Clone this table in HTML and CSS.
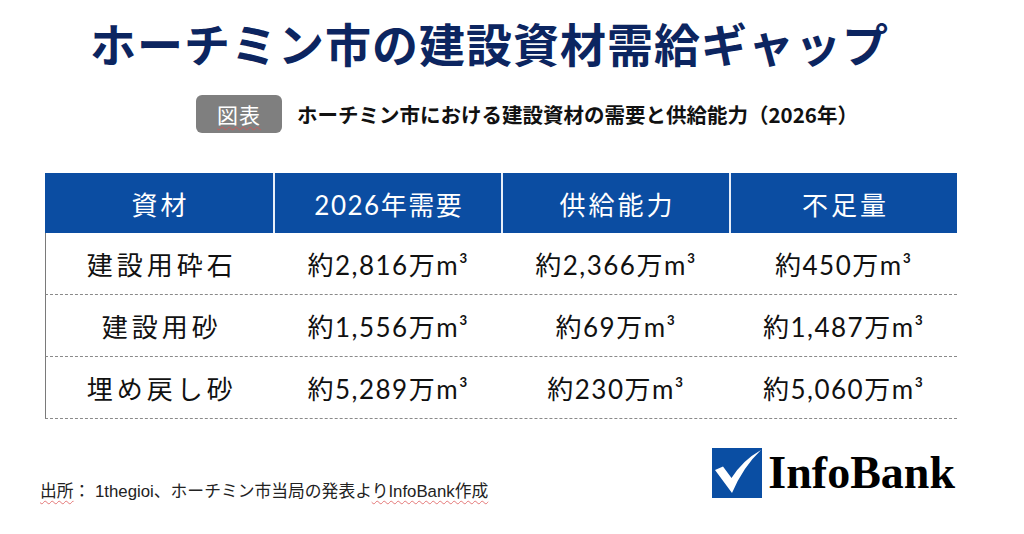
FILE: index.html
```html
<!DOCTYPE html>
<html lang="ja">
<head>
<meta charset="utf-8">
<title>ホーチミン市の建設資材需給ギャップ</title>
<link rel="stylesheet" href="styles.css">
</head>
<body>
<div class="page">
  <h1 class="title">ホーチミン市の建設資材需給ギャップ</h1>
  <div class="caption">
    <span class="pill"><span class="squiggle">図表</span></span>
    <span class="caption-text">ホーチミン市における建設資材の需要と供給能力（2026年）</span>
  </div>
  <div class="table">
    <div class="row head">
      <div class="cell label">資材</div>
      <div class="cell">2026年需要</div>
      <div class="cell label">供給能力</div>
      <div class="cell label">不足量</div>
    </div>
    <div class="row body">
      <div class="cell label">建設用砕石</div>
      <div class="cell">約2,816万m³</div>
      <div class="cell">約2,366万m³</div>
      <div class="cell">約450万m³</div>
    </div>
    <div class="row body">
      <div class="cell label">建設用砂</div>
      <div class="cell">約1,556万m³</div>
      <div class="cell">約69万m³</div>
      <div class="cell">約1,487万m³</div>
    </div>
    <div class="row body">
      <div class="cell label">埋め戻し砂</div>
      <div class="cell">約5,289万m³</div>
      <div class="cell">約230万m³</div>
      <div class="cell">約5,060万m³</div>
    </div>
  </div>
  <div class="footer">
    <p class="source"><span class="squiggle">出所</span>： 1thegioi、ホーチミン市当局の発表よ<span class="squiggle">りInfoBank作成</span></p>
    <div class="logo">
      <svg class="logo-mark" viewBox="0 0 50 50" width="50" height="50" aria-hidden="true">
        <rect x="0" y="0" width="50" height="50" fill="#0a4ea3"/>
        <path d="M3 22 L11 18.5 L19.5 30 Q31 12 49 2 Q31 19 20 45 Z" fill="#ffffff"/>
      </svg>
      <span class="logo-text">InfoBank</span>
    </div>
  </div>
</div>
</body>
</html>
```
FILE: styles.css
```css
* { box-sizing: border-box; }
html, body { margin: 0; padding: 0; background: #ffffff; }
body {
  font-family: Lato, "Noto Sans CJK JP", sans-serif;
  color: #111111;
}
.page {
  width: 1024px;
  height: 534px;
  overflow: hidden;
}
.title {
  margin: 0;
  padding: 14px 0 0 90px;
  font-family: "Noto Sans CJK JP", sans-serif;
  font-weight: 700;
  font-size: 46px;
  line-height: 56px;
  letter-spacing: 1px;
  color: #0c2560;
}
.caption {
  display: flex;
  align-items: center;
  gap: 15px;
  margin: 25px 0 0 196px;
  height: 38px;
}
.pill {
  display: flex;
  align-items: center;
  justify-content: center;
  width: 86px;
  height: 38px;
  border-radius: 6px;
  background: #7f7f7f;
  color: #ffffff;
  font-family: "Noto Sans CJK JP", sans-serif;
  font-size: 21px;
  letter-spacing: 1px;
}
.squiggle {
  text-decoration: underline wavy rgba(220, 80, 80, 0.75);
  text-decoration-thickness: 1px;
  text-underline-offset: 3px;
}
.caption-text {
  font-family: "Noto Sans CJK JP", sans-serif;
  font-weight: 700;
  font-size: 20.5px;
  color: #111111;
}
.table {
  margin: 40px 0 0 45px;
  width: 912px;
}
.row {
  display: grid;
  grid-template-columns: repeat(4, 1fr);
}
.row.head {
  height: 60px;
  background: #0b4da2;
  color: #ffffff;
}
.row.head .cell + .cell {
  border-left: 2px solid #e8eef8;
}
.row.body {
  height: 62px;
  border-left: 1px solid #7a7a7a;
  border-bottom: 1px dashed #8a8a8a;
}
.cell {
  display: flex;
  align-items: center;
  justify-content: center;
  font-size: 26px;
  letter-spacing: 1.5px;
  padding-left: 1.5px;
}
.row.head .cell.label {
  letter-spacing: 3px;
  padding-left: 3px;
}
.row.body .cell.label {
  letter-spacing: 4px;
  padding-left: 4px;
}
.footer {
  display: flex;
  justify-content: space-between;
  align-items: flex-end;
  margin-top: 29px;
  padding: 0 69px 0 40px;
}
.source {
  margin: 0 0 -4px 0;
  font-family: "Liberation Sans", "Noto Sans CJK JP", sans-serif;
  font-size: 16.8px;
  color: #222222;
}
.logo {
  display: flex;
  align-items: center;
  gap: 6px;
}
.logo-mark { display: block; }
.logo-text {
  font-family: "Liberation Serif", serif;
  font-weight: 700;
  font-size: 46px;
  line-height: 50px;
  color: #000000;
}
```
